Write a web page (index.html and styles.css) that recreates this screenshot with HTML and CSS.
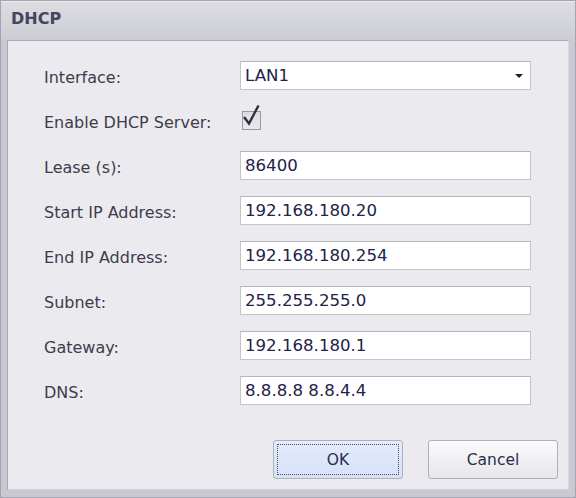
FILE: index.html
```html
<!DOCTYPE html>
<html>
<head>
<meta charset="utf-8">
<link rel="stylesheet" href="styles.css">
</head>
<body>
<div class="window">
  <div class="titlebar">DHCP</div>
  <div class="panel">
    <div class="form">
      <div class="label">Interface:</div>
      <div class="field select"><span>LAN1</span><span class="arrow"></span></div>

      <div class="label">Enable DHCP Server:</div>
      <div class="checkcell">
        <span class="checkbox">
          <svg width="24" height="26" viewBox="0 0 24 26"><path d="M4 14 L9 20.5 L18.5 2.5" fill="none" stroke="#2e2e3c" stroke-width="2.4" stroke-linejoin="miter"/></svg>
        </span>
      </div>

      <div class="label">Lease (s):</div>
      <div class="field">86400</div>

      <div class="label">Start IP Address:</div>
      <div class="field">192.168.180.20</div>

      <div class="label">End IP Address:</div>
      <div class="field">192.168.180.254</div>

      <div class="label">Subnet:</div>
      <div class="field">255.255.255.0</div>

      <div class="label">Gateway:</div>
      <div class="field">192.168.180.1</div>

      <div class="label">DNS:</div>
      <div class="field">8.8.8.8 8.8.4.4</div>
    </div>
    <div class="buttons">
      <div class="btn ok"><span class="focus">OK</span></div>
      <div class="btn">Cancel</div>
    </div>
  </div>
</div>
</body>
</html>
```

FILE: styles.css
```css
html, body {
  margin: 0;
  padding: 0;
}
body {
  width: 576px;
  height: 498px;
  overflow: hidden;
  font-family: "DejaVu Sans", sans-serif;
  font-size: 16px;
}
.window {
  box-sizing: border-box;
  width: 576px;
  height: 498px;
  border: 1px solid #a4a4b0;
  background: #c9c9d1;
  display: flex;
  flex-direction: column;
}
.titlebar {
  height: 38px;
  box-sizing: border-box;
  padding: 7px 0 0 10px;
  font-weight: bold;
  font-size: 16px;
  color: #45455f;
  background: linear-gradient(#dcdce2, #cdcdd5);
  border-top: 1px solid #ececf0;
}
.panel {
  margin: 1px 6px 7px 6px;
  flex: 1;
  background: #ebebef;
  border: 1px solid #a8a8b4;
  border-right-color: #d8d8de;
  border-bottom-color: #d4d4da;
  padding: 20px 10px 0 36px;
  display: flex;
  flex-direction: column;
}
.form {
  display: grid;
  grid-template-columns: 196px 291px;
  grid-auto-rows: 29px;
  row-gap: 16px;
  align-items: center;
}
.label {
  color: #3c3c4c;
  font-size: 16px;
  padding-top: 4px;
}
.field {
  box-sizing: border-box;
  height: 29px;
  background: #ffffff;
  border: 1px solid #c4c4cc;
  border-top-color: #b4b4be;
  padding: 0 0 0 4px;
  display: flex;
  align-items: center;
  color: #22224a;
  font-size: 16.6px;
}
.select {
  justify-content: space-between;
  padding-right: 7px;
}
.arrow {
  width: 0;
  height: 0;
  border-left: 4px solid transparent;
  border-right: 4px solid transparent;
  border-top: 4px solid #1e1e2a;
}
.checkcell {
  display: flex;
  align-items: center;
  padding-left: 2px;
}
.checkbox {
  position: relative;
  box-sizing: border-box;
  width: 19px;
  height: 19px;
  border: 1px solid #9a9aa6;
  background: linear-gradient(#dcdce2, #e8e8ec);
}
.checkbox svg {
  position: absolute;
  left: -3px;
  top: -9px;
}
.buttons {
  display: flex;
  justify-content: flex-end;
  gap: 25px;
  margin-top: 35px;
}
.btn {
  box-sizing: border-box;
  width: 130px;
  height: 39px;
  border: 1px solid #b0b0ba;
  border-radius: 3px;
  background: linear-gradient(#fbfbfc, #e6e6ea);
  color: #2c2c4c;
  font-size: 15.5px;
  display: flex;
  align-items: center;
  justify-content: center;
}
.ok {
  background: linear-gradient(#e4ebfb, #d6e1f8);
  padding: 3px;
}
.focus {
  box-sizing: border-box;
  width: 100%;
  height: 100%;
  border: 1px dotted #4a4a5a;
  display: flex;
  align-items: center;
  justify-content: center;
}
```
